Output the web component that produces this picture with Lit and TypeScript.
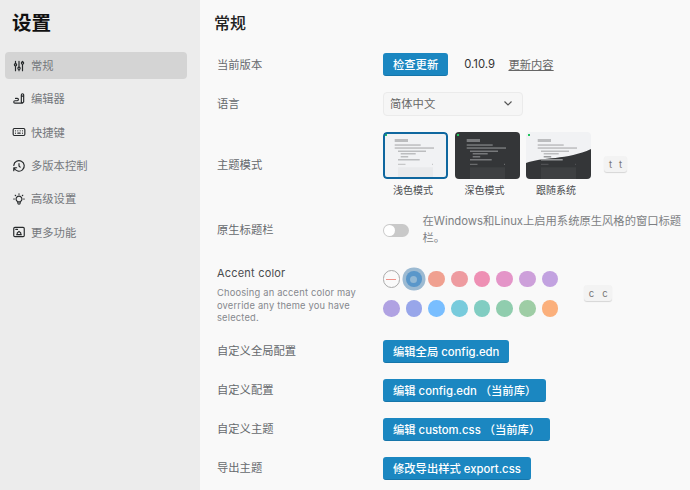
import { LitElement, html, css, svg } from "lit";
import { customElement } from "lit/decorators.js";

const icons = [
  svg`<circle cx="6" cy="10" r="2"/><path d="M6 4v4M6 12v8"/><circle cx="12" cy="16" r="2"/><path d="M12 4v10M12 18v2"/><circle cx="18" cy="7" r="2"/><path d="M18 4v1M18 9v11"/>`,
  svg`<path d="M20 17v-12c0-1.121-.879-2-2-2s-2 .879-2 2v12l2 2l2-2zM16 7h4M18 19h-13a2 2 0 1 1 0-4h4a2 2 0 1 0 0-4h-3"/>`,
  svg`<rect x="2" y="6" width="20" height="12" rx="2"/><path d="M6 10v.01M10 10v.01M14 10v.01M18 10v.01M6 14v.01M18 14v.01M10 14l4 .01"/>`,
  svg`<path d="M12 8v4l2 2M3.05 11a9 9 0 1 1 .5 4m-.5 5v-5h5"/>`,
  svg`<path d="M3 12h1m8-9v1m8 8h1m-15.4-6.4l.7.7m12.1-.7l-.7.7M9 16a5 5 0 1 1 6 0a3.5 3.5 0 0 0-1 3a2 2 0 0 1-4 0a3.5 3.5 0 0 0-1-3M9.7 17h4.6"/>`,
  svg`<rect x="3" y="4" width="18" height="16" rx="2"/><path d="M8 16.5h8M9 16.5v-3l3-2.5l3 2.5v3M6.5 7.5h3"/>`,
];
const nav = ["常规", "编辑器", "快捷键", "多版本控制", "高级设置", "更多功能"];
const row1 = ["#f0a090", "#ee9ba0", "#ee90b4", "#e495c8", "#cda0da", "#c2a2e0"];
const row2 = ["#b0a2e2", "#98a6ea", "#79beff", "#78cbdc", "#81cdc2", "#90cdae", "#9ecda5", "#fbb07c"];

function preview(bg: string, bar: string, box: string, wave: boolean) {
  const waveBar = "#9a9c9e";
  return svg`<svg class="thumb" viewBox="0 0 65 47" width="65" height="47" aria-hidden="true">
    <rect width="65" height="47" fill="${bg}"/>
    ${wave ? svg`<path d="M0 31C15 25 42 28 65 17V47H0Z" fill="#343638"/>` : ""}
    <rect x="2" y="2" width="2" height="2" fill="#22c55e"/>
    <g fill="${bar}">
      <rect x="11.7" y="7" width="13.3" height="3"/>
      <rect x="11.7" y="12.3" width="26" height="1.5"/>
      <rect x="11.7" y="15.3" width="39.3" height="1.5"/>
      <rect x="15" y="18.5" width="28" height="1.5"/>
      <rect x="17.7" y="21" width="15" height="1.5"/>
      <rect x="17.7" y="24" width="7.5" height="1.5" fill="${wave ? waveBar : bar}"/>
      <rect x="15" y="27" width="21.7" height="1.5" fill="${wave ? waveBar : bar}"/>
      <rect x="15" y="31.8" width="7.5" height="1" fill="${wave ? "#56585a" : bar}"/>
      <rect x="49" y="31.8" width="1" height="1" fill="${wave ? "#56585a" : bar}"/>
    </g>
    <rect x="15" y="35.3" width="35" height="11.7" fill="${box}"/>
  </svg>`;
}

@customElement("app-root")
export class AppRoot extends LitElement {
  static styles = css`
    :host {
      display: block;
      width: 690px;
      height: 490px;
      overflow: hidden;
      font-family: Inter, "Noto Sans CJK SC", sans-serif;
      font-size: 11.3px;
      color: #66696d;
    }
    .app { display: flex; height: 490px; }
    .side { width: 200px; flex: none; background: #ececec; padding: 9px 13px 0 5px; box-sizing: border-box; }
    .side h1 { margin: 0 0 15px 7px; font-size: 19.5px; line-height: 28px; font-weight: 700; color: #111; }
    .nav { display: flex; flex-direction: column; gap: 6.4px; }
    .item { display: flex; align-items: center; gap: 5px; height: 27px; padding-left: 7px; border-radius: 4px; color: #75787c; }
    .item span { padding-bottom: 1.5px; }
    .item.on { background: #d4d4d4; }
    .item svg { width: 14px; height: 14px; flex: none; fill: none; stroke: #26292b; stroke-width: 2; stroke-linecap: round; stroke-linejoin: round; }
    .main { flex: 1; background: #f9f9f9; padding: 13px 0 0 14px; box-sizing: border-box; }
    .main h2 { margin: 0; font-size: 16px; line-height: 20px; font-weight: 500; color: #222; height: 32px; }
    .row { display: grid; grid-template-columns: 169px 1fr; align-items: center; padding: 8px 0; }
    .row.native { padding: 7px 0 9px; }
    .label { padding: 0 0 1.5px 3px; }
    .btn-label { padding-bottom: 3px; }
    .controls { display: flex; align-items: center; }
    .btn { display: inline-flex; align-items: center; height: 23px; box-sizing: border-box; padding: 0 10px 1px; border-radius: 3px; background: #1b87c1; border-bottom: 1px solid #1676aa; color: #fff; font-weight: 500; white-space: nowrap; }
    .ver { margin-left: 16px; color: #333; padding-bottom: 1px; }
    .link { margin-left: 13.5px; text-decoration: underline; color: #666; padding-bottom: 1px; }
    .select { width: 140px; height: 24px; box-sizing: border-box; border: 1px solid #ebebeb; border-radius: 4px; background: #f6f6f6; display: flex; align-items: center; justify-content: space-between; padding: 0 8px 2px 6px; color: #666; }
    .select svg { width: 12px; height: 12px; fill: none; stroke: #555; stroke-width: 1.2; }
    .themes { display: flex; gap: 6.5px; align-items: flex-start; }
    .theme { display: flex; flex-direction: column; align-items: center; gap: 3px; width: 65px; color: #4a4c4f; font-size: 10px; line-height: 16px; }
    .theme > span { padding-right: 5px; }
    .frame { width: 65px; height: 47px; border-radius: 4px; overflow: hidden; position: relative; }
    .frame.sel::after { content: ""; position: absolute; inset: 0; border: 2px solid #0f679f; border-radius: 4px; }
    .thumb { display: block; }
    .kbd { display: inline-flex; justify-content: center; box-sizing: border-box; height: 16px; align-items: center; border-radius: 3px; background: #f3f3f3; box-shadow: 0 1px 1px rgba(0,0,0,.14); font-size: 9.5px; color: #777; }
    .kt { width: 23px; gap: 7px; margin: 24px 0 0 13px; }
    .toggle { width: 26px; height: 13px; flex: none; border-radius: 7px; background: #c9c9c9; display: flex; align-items: center; padding-left: 1px; box-sizing: border-box; }
    .toggle i { width: 11px; height: 11px; border-radius: 50%; background: #fff; }
    .hint { margin-left: 13.5px; line-height: 17px; color: #7d7f83; }
    .accent { align-items: start; height: 76px; box-sizing: border-box; }
    .atitle { line-height: 17px; color: #4a4c4f; font-size: 11px; letter-spacing: .2px; margin-top: 1px; }
    .adesc { font-size: 9.3px; line-height: 12.6px; color: #85888d; letter-spacing: .2px; margin-top: 5px; width: 145px; }
    .swatches { display: grid; grid-template-columns: repeat(8, 22.67px); grid-auto-rows: 29.3px; margin: 0.5px 0 0 -3px; align-items: center; justify-items: center; }
    .dot { width: 16.6px; height: 16.6px; border-radius: 50%; background: var(--c); }
    .dot.none { width: 17.5px; height: 17.5px; box-sizing: border-box; border: 1px solid #aaa; background: #fafafa; display: flex; align-items: center; justify-content: center; }
    .dot.none::after { content: ""; width: 10px; height: 1.2px; background: #f0938a; }
    .dot.cur { width: 15.5px; height: 15.5px; background: #5a97ca; box-shadow: 0 0 0 3.5px #9cbad2; display: flex; align-items: center; justify-content: center; }
    .dot.cur::after { content: ""; width: 7px; height: 7px; border-radius: 50%; background: #92b8d4; }
    .kc { width: 28px; gap: 8px; margin: 21px 0 0 23px; }
  `;

  private get side() {
    return html`<aside class="side">
      <h1>设置</h1>
      <nav class="nav">
        ${nav.map((n, i) => html`<div class="item ${i === 0 ? "on" : ""}"><svg viewBox="0 0 24 24" aria-hidden="true">${icons[i]}</svg><span>${n}</span></div>`)}
      </nav>
    </aside>`;
  }

  private btnRow(label: string, text: string) {
    return html`<div class="row"><div class="label btn-label">${label}</div><div class="controls"><span class="btn">${text}</span></div></div>`;
  }

  render() {
    return html`<div class="app">
      ${this.side}
      <main class="main">
        <h2>常规</h2>
        <div class="row"><div class="label">当前版本</div><div class="controls"><span class="btn">检查更新</span><span class="ver">0.10.9</span><span class="link">更新内容</span></div></div>
        <div class="row"><div class="label">语言</div><div class="controls"><div class="select"><span>简体中文</span><svg viewBox="0 0 12 12" aria-hidden="true"><path d="M2.5 4.5L6 8l3.5-3.5"/></svg></div></div></div>
        <div class="row">
          <div class="label">主题模式</div>
          <div class="controls" style="align-items:flex-start">
            <div class="themes">
              <div class="theme"><div class="frame sel">${preview("#f1f2f4", "#bcbdbf", "#e9eaec", false)}</div><span>浅色模式</span></div>
              <div class="theme"><div class="frame">${preview("#343638", "#77797b", "#3e4042", false)}</div><span>深色模式</span></div>
              <div class="theme"><div class="frame">${preview("#f1f2f4", "#bcbdbf", "#3e4042", true)}</div><span>跟随系统</span></div>
            </div>
            <span class="kbd kt"><span>t</span><span>t</span></span>
          </div>
        </div>
        <div class="row native">
          <div class="label">原生标题栏</div>
          <div class="controls"><div class="toggle"><i></i></div><div class="hint">在Windows和Linux上启用系统原生风格的窗口标题栏。</div></div>
        </div>
        <div class="row accent">
          <div class="label"><div class="atitle">Accent color</div><div class="adesc">Choosing an accent color may override any theme you have selected.</div></div>
          <div class="controls" style="align-items:flex-start">
            <div class="swatches">
              <div class="dot none"></div>
              <div class="dot cur"></div>
              ${row1.map((c) => html`<div class="dot" style="--c:${c}"></div>`)}
              ${row2.map((c) => html`<div class="dot" style="--c:${c}"></div>`)}
            </div>
            <span class="kbd kc"><span>c</span><span>c</span></span>
          </div>
        </div>
        ${this.btnRow("自定义全局配置", "编辑全局 config.edn")}
        ${this.btnRow("自定义配置", "编辑 config.edn （当前库）")}
        ${this.btnRow("自定义主题", "编辑 custom.css （当前库）")}
        ${this.btnRow("导出主题", "修改导出样式 export.css")}
      </main>
    </div>`;
  }
}
